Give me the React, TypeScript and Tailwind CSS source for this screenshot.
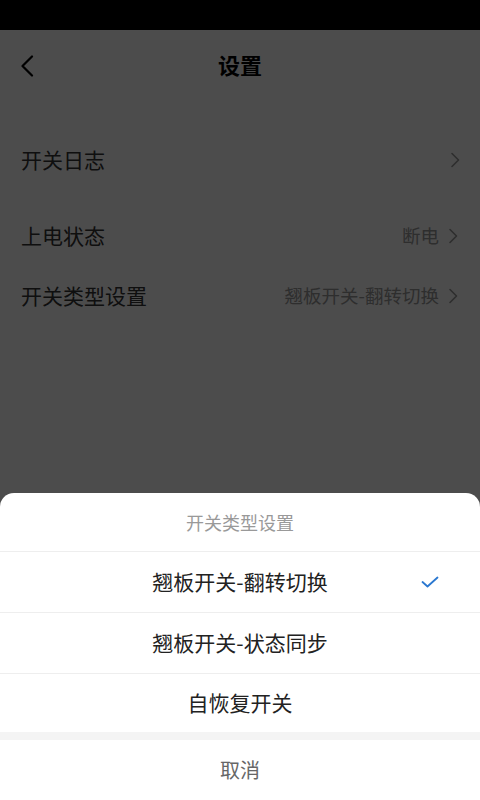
import React from "react";

const Chevron = ({ className = "" }: { className?: string }) => (
  <svg width="10" height="16" viewBox="0 0 10 16" className={className} fill="none">
    <path d="M2 1.5 L8.5 8 L2 14.5" stroke="#999" strokeWidth="1.6" strokeLinecap="round" strokeLinejoin="round" />
  </svg>
);

export default function App() {
  const font = { fontFamily: '"Noto Sans CJK SC", "Noto Sans", sans-serif' };
  return (
    <div className="relative w-[480px] h-[800px] overflow-hidden bg-white" style={font}>
      <div className="h-[30px] bg-black" />
      {/* header */}
      <div className="relative h-[68px] flex items-center justify-center">
        <svg width="14" height="22" viewBox="0 0 14 22" className="absolute left-[20px] top-[25px]" fill="none">
          <path d="M12 1.5 L2.5 11 L12 20.5" stroke="#000" strokeWidth="2.2" strokeLinecap="round" strokeLinejoin="round" />
        </svg>
        <span className="text-[22px] font-bold text-black">设置</span>
      </div>
      <div className="h-[32px]" />
      <div className="h-[60px] flex items-center justify-between pl-[21px] pr-[20px]">
        <span className="text-[21px] text-[#333]">开关日志</span>
        <Chevron />
      </div>
      <div className="h-[16px]" />
      <div className="h-[60px] flex items-center justify-between pl-[21px] pr-[22px]">
        <span className="text-[21px] text-[#333]">上电状态</span>
        <div className="flex items-center gap-[9px]">
          <span className="text-[18.5px] text-[#999]">断电</span>
          <Chevron />
        </div>
      </div>
      <div className="h-[60px] flex items-center justify-between pl-[21px] pr-[22px]">
        <span className="text-[21px] text-[#333]">开关类型设置</span>
        <div className="flex items-center gap-[9px]">
          <span className="text-[18.5px] text-[#999]">翘板开关-翻转切换</span>
          <Chevron />
        </div>
      </div>

      {/* overlay */}
      <div className="absolute left-0 right-0 top-[30px] bottom-0 bg-black/70" />

      {/* bottom sheet */}
      <div className="absolute left-0 right-0 bottom-0 bg-white rounded-t-[14px] flex flex-col">
        <div className="h-[58px] flex items-center justify-center text-[18px] text-[#999]">开关类型设置</div>
        <div className="h-px bg-[#eeeeee]" />
        <div className="relative h-[60px] flex items-center justify-center text-[21px] text-[#222]">
          翘板开关-翻转切换
          <svg width="18" height="12" viewBox="0 0 18 12" className="absolute left-[421px] top-[24px]" fill="none">
            <path d="M1.5 6 L6.5 10.5 L16.5 1.5" stroke="#2b78d0" strokeWidth="1.8" strokeLinecap="round" strokeLinejoin="round" />
          </svg>
        </div>
        <div className="h-px bg-[#eeeeee]" />
        <div className="h-[60px] flex items-center justify-center text-[21px] text-[#222]">翘板开关-状态同步</div>
        <div className="h-px bg-[#eeeeee]" />
        <div className="h-[58px] flex items-center justify-center text-[21px] text-[#222]">自恢复开关</div>
        <div className="h-[8px] bg-[#f4f4f4]" />
        <div className="h-[60px] flex items-center justify-center text-[20px] text-[#666]">取消</div>
      </div>
    </div>
  );
}
